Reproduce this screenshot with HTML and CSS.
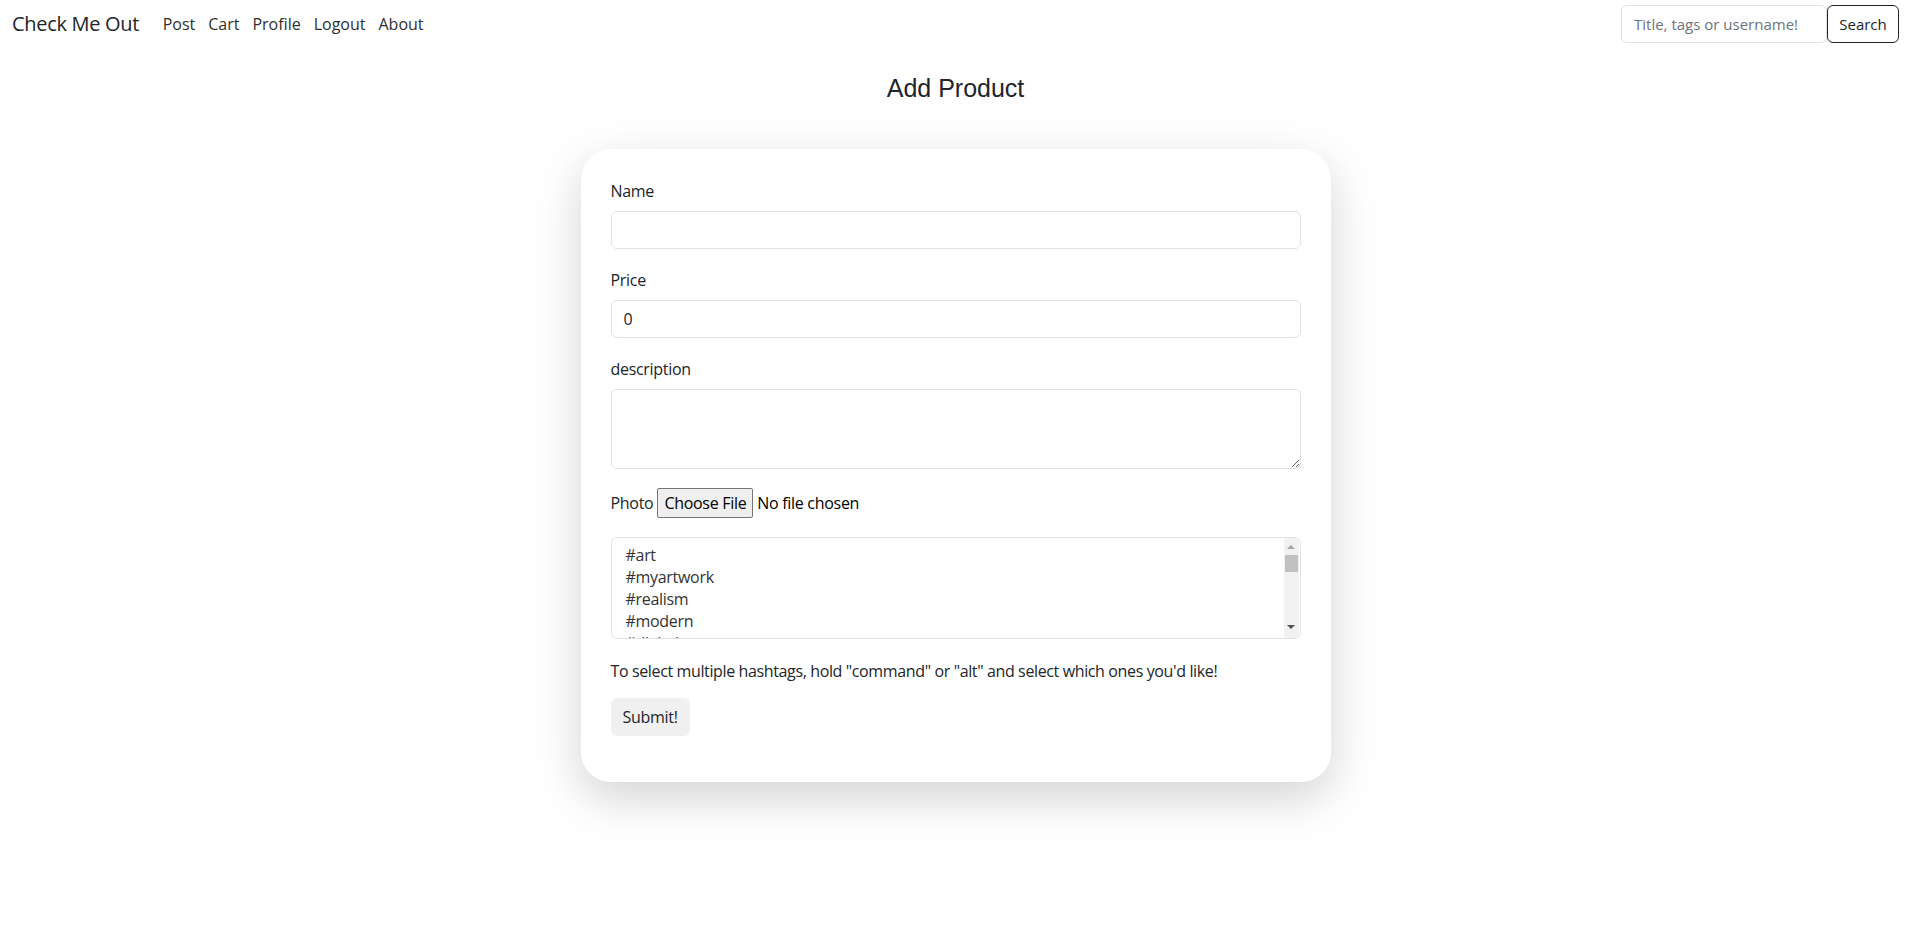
FILE: index.html
```html
<!DOCTYPE html>
<html lang="en">
<head>
<meta charset="utf-8">
<title>Check Me Out - Add Product</title>
<link rel="stylesheet" href="styles.css">
</head>
<body>
<nav class="navbar">
  <div class="nav-left">
    <a class="brand" href="#">Check Me Out</a>
    <ul class="nav-links">
      <li><a href="#">Post</a></li>
      <li><a href="#">Cart</a></li>
      <li><a href="#">Profile</a></li>
      <li><a href="#">Logout</a></li>
      <li><a href="#">About</a></li>
    </ul>
  </div>
  <form class="search">
    <input class="search-input" type="search" placeholder="Title, tags or username!">
    <button class="search-btn" type="button">Search</button>
  </form>
</nav>

<main class="page">
  <h1 class="title">Add Product</h1>
  <form class="card">
    <div class="group">
      <label class="label">Name</label>
      <input class="control" type="text">
    </div>
    <div class="group">
      <label class="label">Price</label>
      <input class="control" type="text" value="0">
    </div>
    <div class="group">
      <label class="label">description</label>
      <textarea class="control area"></textarea>
    </div>
    <div class="file-row">
      <span class="file-label">Photo</span>
      <button class="file-btn" type="button">Choose File</button>
      <span class="file-name">No file chosen</span>
    </div>
    <div class="tags" role="listbox">
      <div class="tag-list">
        <div class="tag">#art</div>
        <div class="tag">#myartwork</div>
        <div class="tag">#realism</div>
        <div class="tag">#modern</div>
        <div class="tag">#digitalart</div>
      </div>
      <div class="scrollbar">
        <span class="arrow up"></span>
        <span class="thumb"></span>
        <span class="track-fill"></span>
        <span class="arrow down"></span>
      </div>
    </div>
    <p class="help">To select multiple hashtags, hold "command" or "alt" and select which ones you'd like!</p>
    <button class="submit" type="button">Submit!</button>
  </form>
</main>
</body>
</html>
```

FILE: styles.css
```css
* { box-sizing: border-box; }

html, body { background: #fff; }

body {
  margin: 0;
  min-height: 938px;
  font-family: "Open Sans", "Noto Sans", sans-serif;
  font-size: 16px;
  line-height: 1.5;
  color: #212529;
}

a { text-decoration: none; }

.navbar {
  display: flex;
  justify-content: space-between;
  align-items: center;
  height: 48px;
  padding: 0 12px 0 12px;
}

.nav-left {
  display: flex;
  align-items: center;
}

.brand {
  font-size: 20px;
  color: #212529;
  margin-right: 17px;
  letter-spacing: -0.3px;
}

.nav-links {
  display: flex;
  list-style: none;
  margin: 0;
  padding: 0;
}

.nav-links a {
  display: block;
  padding: 8px 6.5px;
  color: #2f2f2f;
}

.search {
  display: flex;
  margin: 0;
}

.search-input {
  width: 206px;
  height: 38px;
  border: 1px solid #dee2e6;
  border-radius: 6px;
  padding: 6px 12px;
  font: inherit;
  font-size: 15px;
  color: #212529;
  outline: none;
}

.search-input::placeholder { color: #6c757d; }

.search-btn {
  width: 72px;
  height: 38px;
  border: 1px solid #212529;
  border-radius: 6px;
  background: #fff;
  font: inherit;
  font-size: 15px;
  color: #212529;
  padding: 0;
}

.page {
  display: flex;
  flex-direction: column;
  align-items: center;
  padding-bottom: 120px;
}

.title {
  margin: 25px 0 0;
  font-family: "Liberation Sans", Arial, sans-serif;
  font-weight: 400;
  font-size: 25px;
  line-height: 30px;
  color: #212529;
}

.card {
  width: 750px;
  margin-top: 46px;
  padding: 30px 30px 46px;
  border-radius: 30px;
  background: #fff;
  box-shadow: 0 16px 48px rgba(0, 0, 0, 0.175);
}

.group {
  display: flex;
  flex-direction: column;
  margin-bottom: 19px;
}

.label {
  display: block;
  line-height: 24px;
  margin-bottom: 8px;
  letter-spacing: -0.3px;
}

.control {
  display: block;
  width: 100%;
  height: 38px;
  padding: 6px 12px;
  border: 1px solid #dee2e6;
  border-radius: 6px;
  font: inherit;
  color: #212529;
  background: #fff;
  outline: none;
}

.area {
  height: 80px;
  resize: vertical;
}

.file-row {
  display: flex;
  align-items: center;
  height: 30px;
  margin-bottom: 19px;
  letter-spacing: -0.3px;
}

.file-label { margin-right: 4px; }

.file-btn {
  height: 30px;
  padding: 0 6px;
  border: 1px solid #767676;
  border-radius: 2px;
  background: #efefef;
  font: inherit;
  letter-spacing: -0.3px;
  color: #000;
  margin-right: 4px;
}

.file-name { color: #000; }

.tags {
  display: flex;
  height: 102px;
  border: 1px solid #dee2e6;
  border-radius: 6px;
  overflow: hidden;
  margin-bottom: 20px;
}

.tag-list {
  flex: 1;
  padding: 6px 12px;
  overflow: hidden;
}

.tag {
  padding: 0 2px;
  line-height: 22px;
  color: #333;
  letter-spacing: -0.3px;
}

.scrollbar {
  width: 15px;
  margin-right: 1px;
  background: #f1f1f1;
  display: flex;
  flex-direction: column;
  align-items: center;
}

.arrow {
  width: 0;
  height: 0;
  border-left: 4px solid transparent;
  border-right: 4px solid transparent;
}

.arrow.up {
  margin-top: 7px;
  border-bottom: 4px solid #a3a3a3;
}

.arrow.down {
  margin-bottom: 9px;
  border-top: 4px solid #505050;
}

.thumb {
  width: 13px;
  height: 17px;
  margin-top: 6px;
  background: #c1c1c1;
}

.track-fill { flex: 1; }

.help {
  margin: 0 0 15px;
  line-height: 24px;
  letter-spacing: -0.37px;
}

.submit {
  display: block;
  height: 38px;
  padding: 0 12px;
  border: none;
  border-radius: 6px;
  background: #f0f0f0;
  font: inherit;
  letter-spacing: -0.3px;
  color: #212529;
}
```
